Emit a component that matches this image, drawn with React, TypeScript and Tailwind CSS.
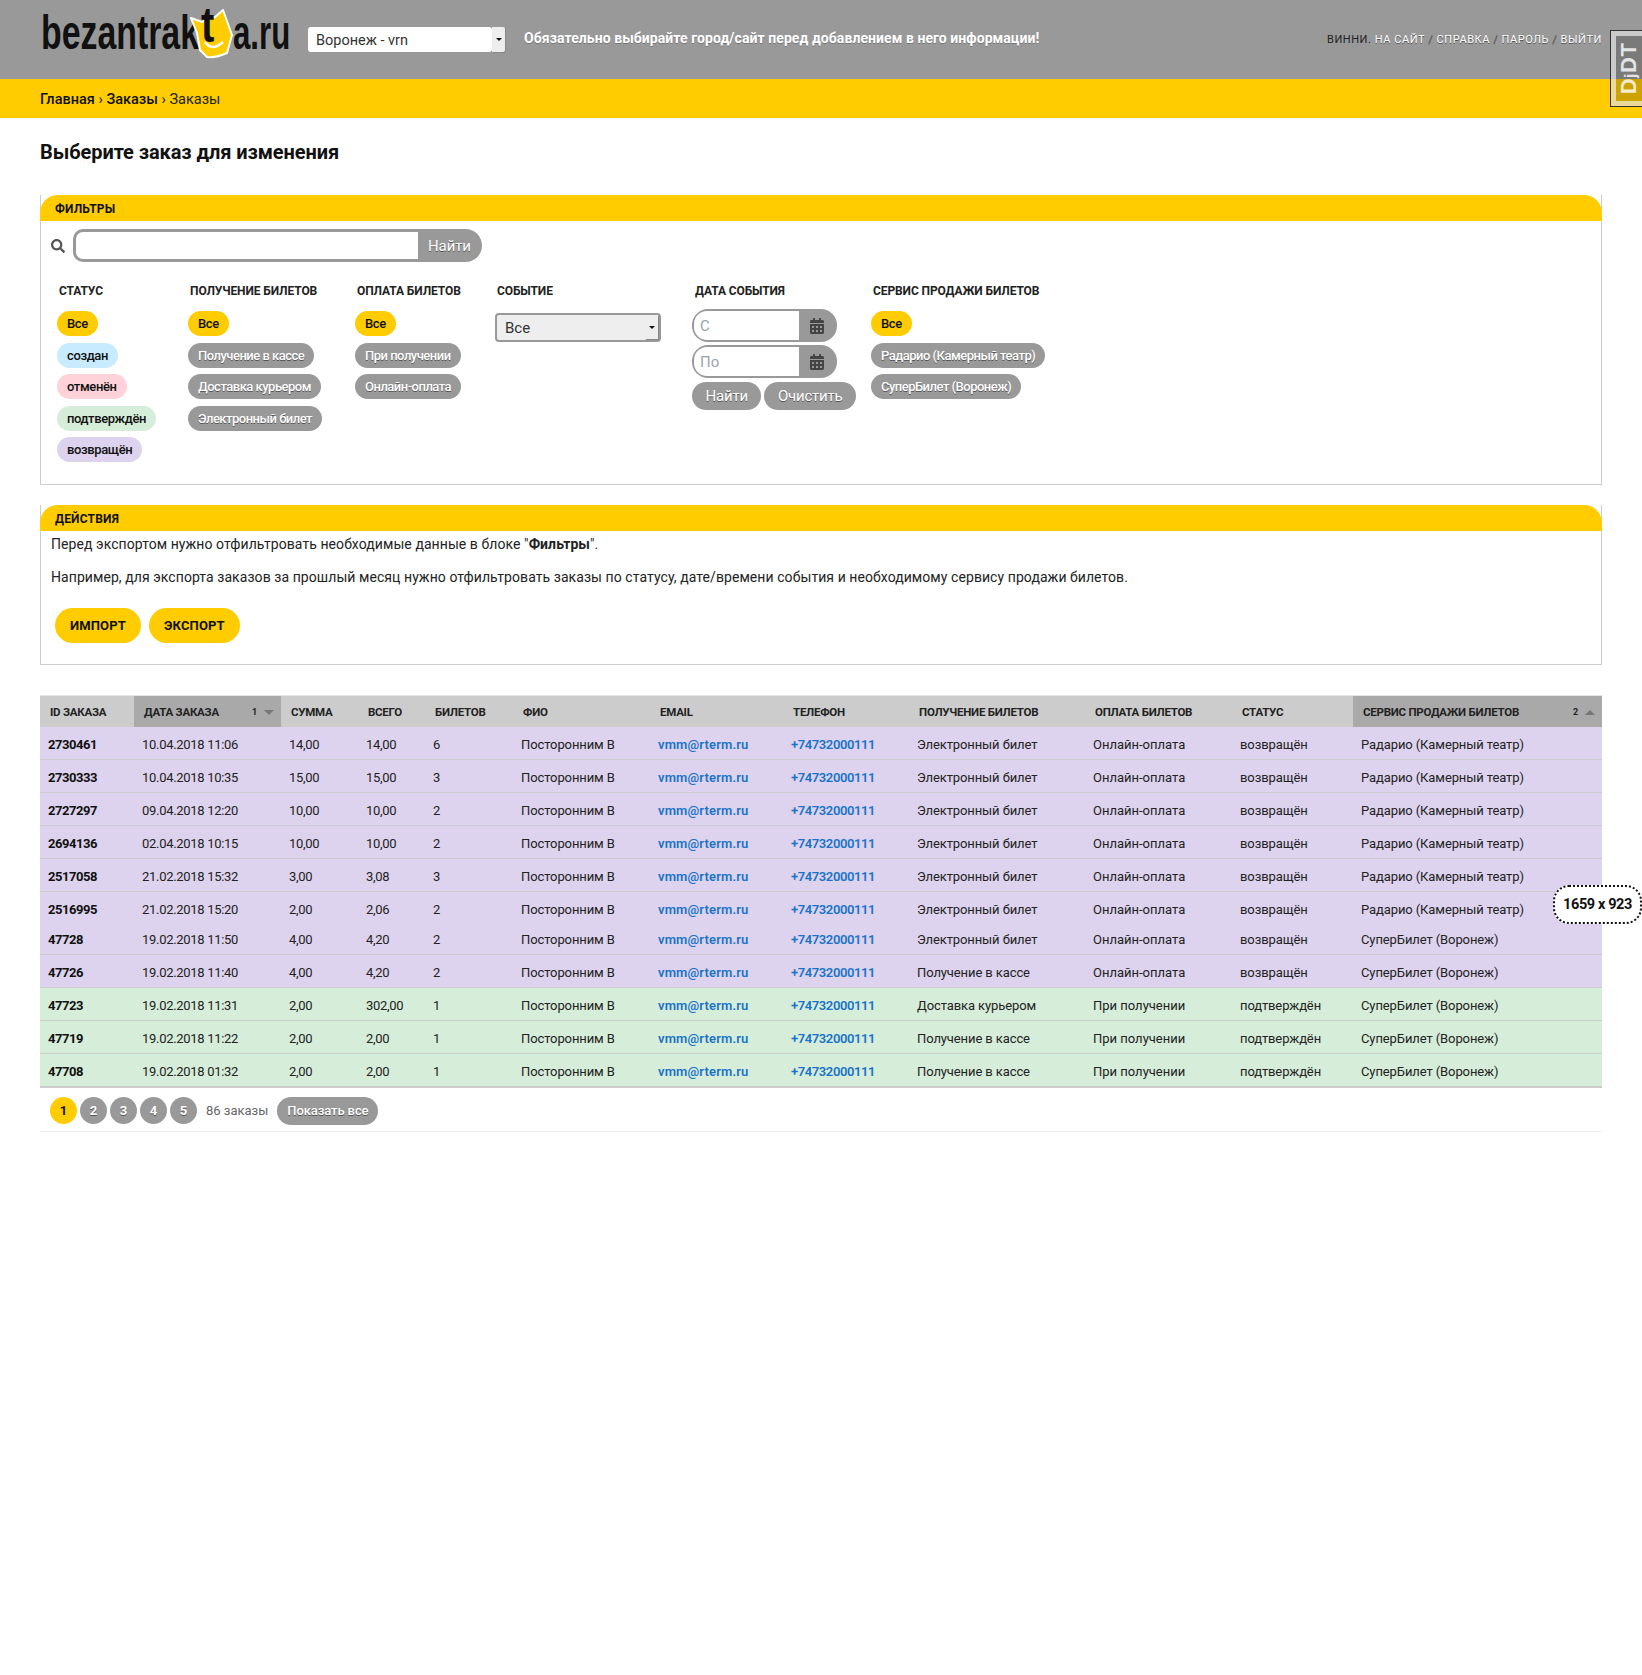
import React from 'react';
import { FaCalendarAlt, FaSearch } from 'react-icons/fa';

const SHADOW_DARK = '[text-shadow:0_1px_0_#555]';

const rows = [
  ['2730461', '10.04.2018 11:06', '14,00', '14,00', '6', 'Электронный билет', 'Онлайн-оплата', 'возвращён', 'Радарио (Камерный театр)'],
  ['2730333', '10.04.2018 10:35', '15,00', '15,00', '3', 'Электронный билет', 'Онлайн-оплата', 'возвращён', 'Радарио (Камерный театр)'],
  ['2727297', '09.04.2018 12:20', '10,00', '10,00', '2', 'Электронный билет', 'Онлайн-оплата', 'возвращён', 'Радарио (Камерный театр)'],
  ['2694136', '02.04.2018 10:15', '10,00', '10,00', '2', 'Электронный билет', 'Онлайн-оплата', 'возвращён', 'Радарио (Камерный театр)'],
  ['2517058', '21.02.2018 15:32', '3,00', '3,08', '3', 'Электронный билет', 'Онлайн-оплата', 'возвращён', 'Радарио (Камерный театр)'],
  ['2516995', '21.02.2018 15:20', '2,00', '2,06', '2', 'Электронный билет', 'Онлайн-оплата', 'возвращён', 'Радарио (Камерный театр)'],
  ['47728', '19.02.2018 11:50', '4,00', '4,20', '2', 'Электронный билет', 'Онлайн-оплата', 'возвращён', 'СуперБилет (Воронеж)'],
  ['47726', '19.02.2018 11:40', '4,00', '4,20', '2', 'Получение в кассе', 'Онлайн-оплата', 'возвращён', 'СуперБилет (Воронеж)'],
  ['47723', '19.02.2018 11:31', '2,00', '302,00', '1', 'Доставка курьером', 'При получении', 'подтверждён', 'СуперБилет (Воронеж)'],
  ['47719', '19.02.2018 11:22', '2,00', '2,00', '1', 'Получение в кассе', 'При получении', 'подтверждён', 'СуперБилет (Воронеж)'],
  ['47708', '19.02.2018 01:32', '2,00', '2,00', '1', 'Получение в кассе', 'При получении', 'подтверждён', 'СуперБилет (Воронеж)'],
];

const Pill = ({ children, className }: { children: React.ReactNode; className: string }) => (
  <span className={`inline-block h-[25px] rounded-full px-[10px] text-[13px] leading-[25px] font-medium whitespace-nowrap ${className}`}>
    {children}
  </span>
);

const ColorPill = ({ children, className }: { children: React.ReactNode; className: string }) => (
  <Pill className={`tracking-[-0.38px] text-[#111] ${className}`}>{children}</Pill>
);

const GrayPill = ({ children }: { children: React.ReactNode }) => (
  <Pill className={`bg-[#999] text-white tracking-[-0.5px] ${SHADOW_DARK}`}>{children}</Pill>
);

const YellowPill = () => <ColorPill className="bg-[#fc0]">Все</ColorPill>;

const FilterColumn = ({ title, className, children }: { title: string; className: string; children: React.ReactNode }) => (
  <div className={className}>
    <h3 className="pl-[2px] mb-[13px] text-[12px] leading-[14px] font-bold uppercase tracking-[-0.1px] text-[#222] whitespace-nowrap">{title}</h3>
    <div className="flex flex-col items-start gap-[6.5px]">{children}</div>
  </div>
);

const PanelHeader = ({ title }: { title: string }) => (
  <div className="h-[26px] rounded-t-[18px] bg-[#fc0] pl-[15px] text-[12px] leading-[28px] font-bold uppercase tracking-[0.2px] text-[#111] -mx-px">
    {title}
  </div>
);

const Logo = () => (
  <div className="relative w-[250px] h-[60px] shrink-0 text-[#111] font-['Liberation_Sans',sans-serif] font-bold">
    <span className="absolute left-[1px] top-[8px] origin-left scale-x-[0.705] text-[48px] leading-[50px] whitespace-nowrap">bezantrak</span>
    <svg className="absolute left-[148px] top-[8px]" width="46" height="52" viewBox="0 0 46 52">
      <path d="M3 10 L14 14 L20 11 L27 9 L35 2 L44 27 L39 45 Q28 50 19 49 L12 42 L9 25 Z" fill="#fc0" stroke="#fff" strokeWidth="2" strokeLinejoin="round" />
      <path d="M17 34 Q24 44 35 34" fill="none" stroke="#fff" strokeWidth="2.5" />
    </svg>
    <span className="absolute left-[161px] top-[0px] origin-left scale-x-[0.8] text-[50px] leading-[50px] whitespace-nowrap">t</span>
    <span className="absolute left-[193px] top-[8px] origin-left scale-x-[0.65] text-[48px] leading-[50px] whitespace-nowrap">a.ru</span>
  </div>
);

const SelectArrow = ({ className }: { className: string }) => (
  <div className={`absolute flex items-center justify-center bg-[#eee] shadow-[1px_1px_1px_#888] ${className}`}>
    <div className="w-0 h-0 border-x-[3px] border-t-[3px] border-x-transparent border-t-[#111]" />
  </div>
);

const DateField = ({ placeholder }: { placeholder: string }) => (
  <div className="flex h-[33px] w-[145px] rounded-[16px] bg-[#999]">
    <div className="w-[105px] m-[2px] mr-0 rounded-l-[13px] bg-white pl-[6px] text-[15px] leading-[31px] text-[#9aa3ad]">{placeholder}</div>
    <div className="flex-1 flex items-center justify-center pr-[3px] text-[#444]">
      <FaCalendarAlt size={16} />
    </div>
  </div>
);

const Th = ({ children, active, mark, up }: { children: React.ReactNode; active?: boolean; mark?: string; up?: boolean }) => (
  <th className={`relative h-[31px] px-[10px] pt-[2px] text-left text-[11.5px] font-bold uppercase tracking-[-0.25px] text-[#222] whitespace-nowrap ${active ? 'bg-[#a9a9a9]' : 'bg-[#ccc]'}`}>
    {children}
    {mark && (
      <span className="absolute right-[7px] top-[10px] flex items-center gap-[7px] text-[9px] leading-[12px]">
        {mark}
        <span className={`w-0 h-0 border-x-[5px] border-x-transparent ${up ? 'border-b-[5px] border-b-[#777]' : 'border-t-[5px] border-t-[#777]'}`} />
      </span>
    )}
  </th>
);

const App = () => {
  return (
    <div className="relative min-h-[1675px] bg-white text-[#222] font-['Roboto',sans-serif] text-[14px]">
      {/* Header */}
      <header className="flex h-[79px] items-start bg-[#999] pl-[40px] pr-[40px]">
        <Logo />
        <div className="relative mt-[27px] ml-[18px] h-[25px] w-[197px] shrink-0">
          <div className="h-[25px] w-[184px] rounded-[3px] bg-white pl-[8px] text-[14.5px] leading-[27px] text-[#333]">Воронеж - vrn</div>
          <SelectArrow className="right-0 top-0 h-[25px] w-[13px] rounded-r-[2px]" />
        </div>
        <div className="mt-[28px] ml-[19px] text-[14px] leading-[20px] font-bold tracking-[0.07px] text-white [text-shadow:0_1px_0_#777] whitespace-nowrap">
          Обязательно выбирайте город/сайт перед добавлением в него информации!
        </div>
        <div className="ml-auto mt-[32px] text-[11px] leading-[15px] uppercase tracking-[0.55px] text-white [text-shadow:0_1px_0_#555] whitespace-nowrap">
          <span className="text-[#222] [text-shadow:none]">Винни.</span> На сайт <span className="text-[#666]">/</span> Справка <span className="text-[#666]">/</span> Пароль <span className="text-[#666]">/</span> Выйти
        </div>
      </header>

      {/* Breadcrumbs */}
      <div className="h-[39px] bg-[#fc0] pl-[40px] text-[14.5px] leading-[41px] text-[#222]">
        <span className="font-medium text-[#111]">Главная</span> › <span className="font-medium text-[#111]">Заказы</span> › Заказы
      </div>

      <main className="px-[40px]">
        <h1 className="mt-[21px] text-[20px] leading-[27px] font-bold tracking-[-0.08px] text-[#111]">Выберите заказ для изменения</h1>

        {/* Filters */}
        <section className="mt-[29px] h-[290px] border-x border-b border-[#ccc]">
          <PanelHeader title="Фильтры" />
          <div className="mt-[8px] flex items-center pl-[10px]">
            <FaSearch size={14} className="text-[#555]" />
            <div className="ml-[8px] h-[33px] w-[345px] rounded-l-[10px] border-[3px] border-r-0 border-[#999] bg-white" />
            <div className={`h-[33px] w-[64px] rounded-r-full bg-[#999] pl-[10px] text-[15px] leading-[34px] tracking-[-0.1px] text-white ${SHADOW_DARK}`}>Найти</div>
          </div>
          <div className="mt-[22px] flex pl-[16px]">
            <FilterColumn title="Статус" className="w-[131px]">
              <YellowPill />
              <ColorPill className="bg-[#c9ebff]">создан</ColorPill>
              <ColorPill className="bg-[#ffd2d9]">отменён</ColorPill>
              <ColorPill className="bg-[#d6edd9]">подтверждён</ColorPill>
              <ColorPill className="bg-[#ddd3ee]">возвращён</ColorPill>
            </FilterColumn>
            <FilterColumn title="Получение билетов" className="w-[167px]">
              <YellowPill />
              <GrayPill>Получение в кассе</GrayPill>
              <GrayPill>Доставка курьером</GrayPill>
              <GrayPill>Электронный билет</GrayPill>
            </FilterColumn>
            <FilterColumn title="Оплата билетов" className="w-[140px]">
              <YellowPill />
              <GrayPill>При получении</GrayPill>
              <GrayPill>Онлайн-оплата</GrayPill>
            </FilterColumn>
            <div className="w-[197px]">
              <h3 className="pl-[2px] text-[12px] leading-[14px] font-bold uppercase tracking-[-0.1px] text-[#222]">Событие</h3>
              <div className="relative mt-[15px] h-[29px] w-[166px] rounded-[4px] border-[2px] border-[#999] bg-[#eee] pl-[8px] text-[15px] leading-[26px] text-[#333]">
                Все
                <SelectArrow className="right-[1px] top-0 h-[24px] w-[13px]" />
              </div>
            </div>
            <div className="w-[179px]">
              <h3 className="pl-[3px] mb-[11px] text-[12px] leading-[14px] font-bold uppercase tracking-[-0.1px] text-[#222]">Дата события</h3>
              <div className="flex flex-col gap-[3px]">
                <DateField placeholder="С" />
                <DateField placeholder="По" />
              </div>
              <div className={`mt-[4px] flex gap-[3px] text-[15px] leading-[28px] tracking-[-0.2px] text-white ${SHADOW_DARK}`}>
                <div className="h-[28px] rounded-full bg-[#999] px-[13.5px]">Найти</div>
                <div className="h-[28px] rounded-full bg-[#999] px-[13.5px]">Очистить</div>
              </div>
            </div>
            <FilterColumn title="Сервис продажи билетов" className="w-[200px]">
              <YellowPill />
              <GrayPill>Радарио (Камерный театр)</GrayPill>
              <GrayPill>СуперБилет (Воронеж)</GrayPill>
            </FilterColumn>
          </div>
        </section>

        {/* Actions */}
        <section className="mt-[20px] h-[160px] border-x border-b border-[#ccc]">
          <PanelHeader title="Действия" />
          <div className="pl-[10px] text-[14px] leading-[20px] tracking-[0.07px] text-[#222]">
            <p className="mt-[3px]">Перед экспортом нужно отфильтровать необходимые данные в блоке "<b>Фильтры</b>".</p>
            <p className="mt-[13px]">Например, для экспорта заказов за прошлый месяц нужно отфильтровать заказы по статусу, дате/времени события и необходимому сервису продажи билетов.</p>
          </div>
          <div className="mt-[21px] flex gap-[8px] pl-[14px]">
            <div className="h-[35px] rounded-full bg-[#fc0] px-[15px] text-[13px] leading-[35px] font-bold uppercase tracking-[0.15px] text-[#111]">Импорт</div>
            <div className="h-[35px] rounded-full bg-[#fc0] px-[15px] text-[13px] leading-[35px] font-bold uppercase tracking-[0.15px] text-[#111]">Экспорт</div>
          </div>
        </section>

        {/* Results */}
        <table className="mt-[30px] w-full table-fixed border-collapse border-t border-[#e5e5e5] text-[13px] tracking-[-0.1px]">
          <colgroup>
            <col className="w-[94px]" />
            <col className="w-[147px]" />
            <col className="w-[77px]" />
            <col className="w-[67px]" />
            <col className="w-[88px]" />
            <col className="w-[137px]" />
            <col className="w-[133px]" />
            <col className="w-[126px]" />
            <col className="w-[176px]" />
            <col className="w-[147px]" />
            <col className="w-[121px]" />
            <col />
          </colgroup>
          <thead>
            <tr>
              <Th>ID заказа</Th>
              <Th active mark="1">Дата заказа</Th>
              <Th>Сумма</Th>
              <Th>Всего</Th>
              <Th>Билетов</Th>
              <Th>ФИО</Th>
              <Th>Email</Th>
              <Th>Телефон</Th>
              <Th>Получение билетов</Th>
              <Th>Оплата билетов</Th>
              <Th>Статус</Th>
              <Th active mark="2" up>Сервис продажи билетов</Th>
            </tr>
          </thead>
          <tbody>
            {rows.map((r, i) => (
              <tr
                key={r[0]}
                className={`${i === 6 ? 'h-[30px]' : i === 5 ? 'h-[33px] [&>td]:pt-[2px]' : 'h-[33px] [&>td]:pt-[4px]'} ${i === 5 ? '' : 'border-b border-[#ccc]'} ${i > 7 ? 'bg-[#d6edd9]' : 'bg-[#ddd3ee]'}`}
              >
                <td className="pl-[8px] font-bold tracking-[-0.45px] text-[#111]">{r[0]}</td>
                <td className="pl-[8px] tracking-[-0.3px]">{r[1]}</td>
                <td className="pl-[8px] tracking-[-0.3px]">{r[2]}</td>
                <td className="pl-[8px] tracking-[-0.3px]">{r[3]}</td>
                <td className="pl-[8px]">{r[4]}</td>
                <td className="pl-[8px]">Посторонним В</td>
                <td className="pl-[8px] font-semibold tracking-[0.15px] text-[#1a73c8]">vmm@rterm.ru</td>
                <td className="pl-[8px] font-semibold tracking-[-0.4px] text-[#1a73c8]">+74732000111</td>
                <td className="pl-[8px]">{r[5]}</td>
                <td className="pl-[8px] tracking-normal">{r[6]}</td>
                <td className="pl-[8px]">{r[7]}</td>
                <td className="pl-[8px]">{r[8]}</td>
              </tr>
            ))}
          </tbody>
        </table>

        {/* Pagination */}
        <div className="flex h-[45px] items-center border-t border-b border-t-[#ccc] border-b-[#eee] pl-[10px] pt-[2px]">
          <div className="flex gap-[3px] text-[13px] font-bold">
            <span className="flex h-[27px] w-[27px] items-center justify-center rounded-full bg-[#fc0] text-[#111]">1</span>
            {['2', '3', '4', '5'].map(n => (
              <span key={n} className={`flex h-[27px] w-[27px] items-center justify-center rounded-full bg-[#999] text-white ${SHADOW_DARK}`}>{n}</span>
            ))}
          </div>
          <span className="ml-[9px] text-[13px] text-[#666]">86 заказы</span>
          <span className={`ml-[9px] h-[28px] rounded-full bg-[#999] px-[10px] text-[13px] leading-[28px] font-medium tracking-[-0.1px] text-white ${SHADOW_DARK}`}>Показать все</span>
        </div>
      </main>

      {/* Django debug toolbar handle */}
      <div className="absolute right-0 top-[30px] h-[77px] w-[32px] border border-r-0 border-[#333]">
        <div className="flex h-full items-center justify-center border-[5px] border-r-0 border-white/60 bg-black/20">
          <span className="-rotate-90 text-[22px] font-bold tracking-[0.5px] text-white/80 font-['Liberation_Sans',sans-serif] whitespace-nowrap">D<span className="text-[16px]">j</span>DT</span>
        </div>
      </div>

      {/* Window size badge */}
      <div className="absolute left-[1553px] top-[885px] flex h-[39px] w-[89px] items-center justify-center rounded-[16px] border-2 border-dotted border-[#111] bg-white text-[14.5px] font-bold tracking-[-0.4px] text-[#111]">
        1659 x 923
      </div>
    </div>
  );
};

export default App;
